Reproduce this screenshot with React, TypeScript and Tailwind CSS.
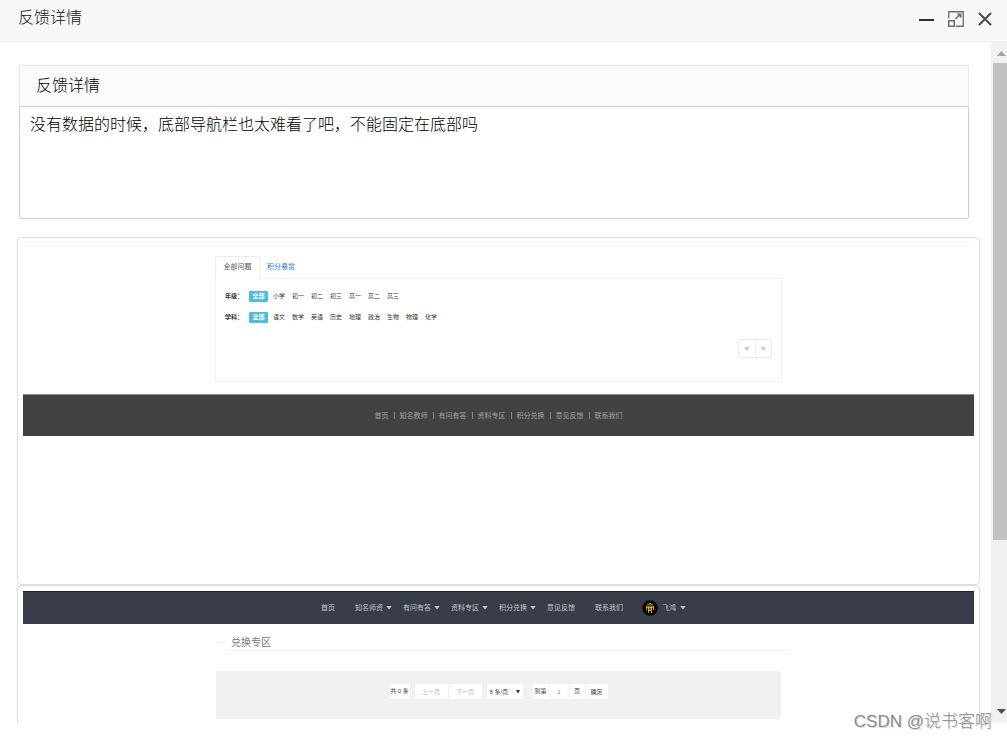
import React from "react";

const GRADES = ["小学", "初一", "初二", "初三", "高一", "高二", "高三"];
const SUBJECTS = ["语文", "数学", "英语", "历史", "地理", "政治", "生物", "物理", "化学"];
const FOOTER_LINKS = ["首页", "知名教师", "有问有答", "资料专区", "积分兑换", "意见反馈", "联系我们"];
const NAV_LINKS = [
  { label: "首页", menu: false },
  { label: "知名师资", menu: true },
  { label: "有问有答", menu: true },
  { label: "资料专区", menu: true },
  { label: "积分兑换", menu: true },
  { label: "意见反馈", menu: false },
  { label: "联系我们", menu: false },
];

function Caret() {
  return (
    <svg width="6" height="4" viewBox="0 0 6 4" className="shrink-0 fill-[#c4c5c9]">
      <path d="M.3 0h5.4L3 3.500z" />
    </svg>
  );
}

function TitleBar() {
  return (
    <header className="flex h-[42px] shrink-0 items-start justify-between border-b border-[#eeeeee] bg-[#f8f8f8] pr-[14px] pl-[18px]">
      <h1 className="mt-[6px] text-base leading-6 text-[#111111]">反馈详情</h1>
      <div className="mt-[11px] flex gap-[13px]">
        <button type="button" aria-label="最小化" className="size-4">
          <svg width="16" height="16" viewBox="0 0 16 16">
            <path d="M0 8h15v2H0z" fill="#2e2d3c" />
          </svg>
        </button>
        <button type="button" aria-label="最大化" className="size-4">
          <svg width="16" height="16" viewBox="0 0 16 16" fill="none" stroke="#6b6a75">
            <path d="M.75 7.500V.75h14.500v14.500H8" strokeWidth="1.300" />
            <path d="M.75 9.750h5.500v5.500H.75z" strokeWidth="1.500" />
            <path d="M7.500 8 12 3.500" strokeWidth="1.500" />
            <path d="M8.500 2.500h5v5z" fill="#6b6a75" stroke="none" />
          </svg>
        </button>
        <button type="button" aria-label="关闭" className="size-4">
          <svg width="16" height="16" viewBox="0 0 16 16" fill="none" stroke="#4a4955" strokeWidth="2" strokeLinecap="round">
            <path d="m2.500 2.500 11 11M13.500 2.500l-11 11" />
          </svg>
        </button>
      </div>
    </header>
  );
}

function FilterRow({ label, items }: { label: string; items: string[] }) {
  return (
    <div className="flex h-[11px] items-center text-[6px] leading-[11px] text-[#333333]">
      <span className="w-6 font-bold">{label}：</span>
      <button type="button" className="mr-[5px] h-[11px] w-[19px] rounded-[1px] bg-[#4fbcdc] font-bold text-white">
        全部
      </button>
      {items.map((item) => (
        <a key={item} href="#" className="w-[19px]">
          {item}
        </a>
      ))}
    </div>
  );
}

// Attachment 1: the question list with nothing in it
function QuestionShot() {
  return (
    <section className="h-[348px] rounded border border-[#dddddd] p-[5px] pt-1 text-[7px] leading-[10px] font-normal">
      <div className="border-t border-[#f5f5f5]" />
      <div className="mx-auto mt-[13px] w-[567px]">
        <div className="flex h-[22px]">
          <a href="#" className="relative z-10 -mb-px w-[45px] rounded-t-[2px] border border-b-0 border-[#eeeeee] bg-white pt-[5px] text-center text-[#555555]">
            全部问题
          </a>
          <a href="#" className="pt-[6px] pl-[7px] text-[#337ab7]">
            积分悬赏
          </a>
        </div>
        <div className="h-[104px] border border-[#f3f3f3] px-[9px] pt-[12px]">
          <div className="flex flex-col gap-[10px]">
            <FilterRow label="年级" items={GRADES} />
            <FilterRow label="学科" items={SUBJECTS} />
          </div>
          <div className="mt-[16px] flex justify-end">
            <div className="flex h-[19px] w-[34px] divide-x divide-[#eeeeee] rounded-[2px] border border-[#eaeaea] text-[#888888]">
              <button type="button" className="flex-1">«</button>
              <button type="button" className="flex-1">»</button>
            </div>
          </div>
        </div>
      </div>
      <div className="mt-[12px] flex h-[42px] items-center justify-center gap-[5px] border-t border-[#888888] bg-[#424242] text-[#a2a2a2]">
        {FOOTER_LINKS.map((link, i) => (
          <React.Fragment key={link}>
            {i > 0 && <span className="h-[7px] w-px bg-[#858585]" />}
            <a href="#">{link}</a>
          </React.Fragment>
        ))}
      </div>
    </section>
  );
}

// Attachment 2: the exchange area, cut off by the bottom of the dialog
function ExchangeShot() {
  return (
    <section className="h-[348px] rounded border border-[#dddddd] p-[5px] text-[7px] leading-[10px] font-normal">
      <nav className="flex h-[33px] items-center justify-center border-t border-[#22242a] bg-[#393d49] text-[#c4c5c9]">
        {NAV_LINKS.map((item) => (
          <a key={item.label} href="#" className={item.menu ? "flex items-center gap-[3px] pr-px pl-[10px]" : "px-[10px]"}>
            {item.label}
            {item.menu && <Caret />}
          </a>
        ))}
        <a href="#" className="flex items-center gap-[4px] pl-[9px]">
          <svg width="16" height="16" viewBox="0 0 16 16">
            <circle cx="8" cy="8" r="7.800" fill="#000" />
            <path d="m8 3-3.500 3v4M8 3l3.500 3v4M6.500 6v7M9.500 6v7M8 4v7M5 7.500h6M6.500 10.500h3" stroke="#d9a400" strokeWidth="1" fill="none" />
          </svg>
          飞鸿
          <Caret />
        </a>
      </nav>
      <div className="mx-auto w-[565px]">
        <div className="mt-[11px] -mr-[9px] flex">
          <div className="mt-[7px] h-px w-[10px] bg-[#f2f2f2]" />
          <h2 className="h-4 flex-1 border-b border-[#f2f2f2] pl-[5px] text-[10px] leading-[15px] text-[#777777]">兑换专区</h2>
        </div>
        <div className="mt-5 flex h-12 items-start justify-center bg-[#f1f1f1] pt-[13px] text-[6px] text-[#444444]">
          <span className="mr-[5px] h-[15px] w-5 bg-white text-center leading-[15px]">共 0 条</span>
          <button type="button" className="h-[15px] w-[33px] bg-white text-[#bbbbbb]">上一页</button>
          <button type="button" className="ml-px h-[15px] w-[33px] bg-white text-[#bbbbbb]">下一页</button>
          <div className="relative mr-[10px] ml-[5px]">
            <select aria-label="每页条数" className="block h-[15px] w-9 appearance-none bg-white pl-[3px]">
              <option>8 条/页</option>
            </select>
            <svg width="4" height="4" viewBox="0 0 4 4" className="pointer-events-none absolute top-[6px] right-[3px]">
              <path d="M0 0h4L2 3.500z" fill="#333333" />
            </svg>
          </div>
          <label htmlFor="page" className="h-[15px] w-4 bg-white text-center leading-[15px]">到第</label>
          <input id="page" defaultValue="1" className="ml-px h-[15px] w-[19px] bg-white text-center text-[#888888]" />
          <span className="ml-px h-[15px] w-[15px] bg-white text-center leading-[15px]">页</span>
          <button type="button" className="ml-px h-[15px] w-[22px] bg-white">确定</button>
        </div>
      </div>
    </section>
  );
}

function ScrollRail() {
  return (
    <div className="flex w-4 shrink-0 flex-col items-end bg-[#f1f1f1]">
      <svg width="14" height="21" viewBox="0 0 14 21" className="shrink-0">
        <path d="M4 14h9L8.500 9z" fill="#a3a3a3" />
      </svg>
      <div className="h-[70%] w-[14px] bg-[#c1c1c1]" />
      <svg width="14" height="21" viewBox="0 0 14 21" className="mt-auto shrink-0">
        <path d="M4 7h9l-4.500 5z" fill="#505050" />
      </svg>
    </div>
  );
}

export default function App() {
  return (
    <div className="relative flex h-screen flex-col overflow-hidden bg-white pb-[17px] font-['Liberation_Sans','Noto_Sans_CJK_SC',sans-serif] font-light">
      <TitleBar />
      <div className="flex min-h-0 flex-1">
        <main className="min-w-0 flex-1 overflow-hidden pt-[23px] pr-[11px] pl-[17px]">
          <div className="mr-[11px] mb-[18px] ml-[2px]">
            <label htmlFor="feedback" className="block h-[41px] rounded-t-[2px] border border-b-0 border-[#e6e6e6] bg-[#fbfbfb] pl-4 text-base leading-10 text-black">
              反馈详情
            </label>
            <textarea
              id="feedback"
              readOnly
              className="block h-[113px] w-full resize-none rounded-b-[2px] border border-[#cfcfcf] px-[10px] py-[6px] text-base leading-6 text-black outline-none"
              defaultValue="没有数据的时候，底部导航栏也太难看了吧，不能固定在底部吗"
            />
          </div>
          <QuestionShot />
          <ExchangeShot />
        </main>
        <ScrollRail />
      </div>
      <p className="absolute right-[15px] bottom-[6px] text-[17px] leading-6 text-[#8c8c8c] [text-shadow:1px_1px_0_#dddddd]">CSDN @说书客啊</p>
    </div>
  );
}
